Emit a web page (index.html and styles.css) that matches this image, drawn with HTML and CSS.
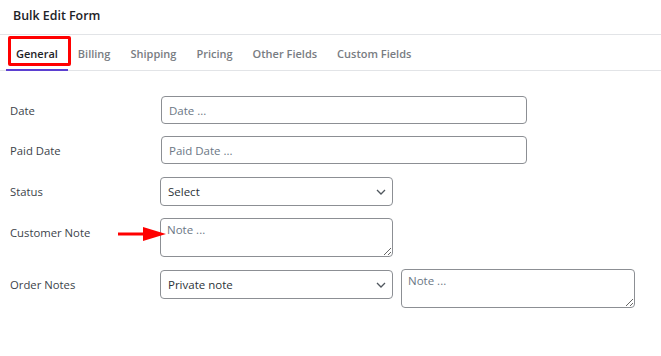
FILE: index.html
```html
<!DOCTYPE html>
<html lang="en">
<head>
    <meta charset="UTF-8">
    <meta name="viewport" content="width=device-width, initial-scale=1.0">
    <title>Bulk Edit Form</title>
    <link rel="stylesheet" href="styles.css">
</head>
<body>
    <div class="header">Bulk Edit Form</div>

    <div class="tabs">
        <span class="tab active">General</span>
        <span class="tab">Billing</span>
        <span class="tab">Shipping</span>
        <span class="tab">Pricing</span>
        <span class="tab">Other Fields</span>
        <span class="tab">Custom Fields</span>
    </div>

    <div class="form">
        <div class="row">
            <label for="date">Date</label>
            <input type="text" id="date" class="wide" placeholder="Date ...">
        </div>
        <div class="row paid-row">
            <label for="paid">Paid Date</label>
            <input type="text" id="paid" class="wide" placeholder="Paid Date ...">
        </div>
        <div class="row">
            <label for="status">Status</label>
            <div class="select-wrap">
                <select id="status">
                    <option>Select</option>
                </select>
                <svg class="chevron" width="10" height="6" viewBox="0 0 10 6"><path d="M1 1l4 4 4-4" fill="none" stroke="#50575e" stroke-width="1.3"/></svg>
            </div>
        </div>
        <div class="row note-row">
            <label for="cnote">Customer Note</label>
            <svg class="arrow" width="50" height="14" viewBox="0 0 50 14"><path d="M0 5.5h28v3H0z" fill="#f00"/><path d="M25 0l23 7-23 7z" fill="#f00"/></svg>
            <textarea id="cnote" placeholder="Note ..."></textarea>
        </div>
        <div class="row">
            <label for="onotes">Order Notes</label>
            <div class="select-wrap">
                <select id="onotes">
                    <option>Private note</option>
                    <option>Note to customer</option>
                </select>
                <svg class="chevron" width="10" height="6" viewBox="0 0 10 6"><path d="M1 1l4 4 4-4" fill="none" stroke="#50575e" stroke-width="1.3"/></svg>
            </div>
            <textarea class="side-note" placeholder="Note ..."></textarea>
        </div>
    </div>
</body>
</html>
```

FILE: styles.css
```css
body {
    margin: 0;
    font-family: "Open Sans", "Noto Sans", sans-serif;
    font-size: 11.3px;
    color: #3c434a;
    background-color: #fff;
}
.header {
    padding: 0 13px;
    height: 34px;
    line-height: 32px;
    font-size: 12.4px;
    font-weight: 600;
    color: #1d2327;
    border-bottom: 1px solid #e2e4e7;
}
.tabs {
    display: flex;
    padding: 0 6px;
    height: 35px;
    border-bottom: 1px solid #e2e4e7;
}
.tab {
    position: relative;
    padding: 0 10px;
    line-height: 38px;
    font-size: 11px;
    font-weight: 600;
    color: #787c82;
}
.tab.active {
    color: #1d2327;
    border-bottom: 2px solid #5b3fd1;
    height: 34px;
}
.tab.active::after {
    content: "";
    position: absolute;
    left: 2px;
    top: 1px;
    right: -3px;
    bottom: 3px;
    border: 3px solid #f00;
    border-radius: 2px;
}
.form {
    padding: 25px 10px;
    display: flex;
    flex-direction: column;
    gap: 12px;
}
.row {
    position: relative;
    display: flex;
    align-items: flex-start;
}
.paid-row,
.note-row {
    margin-bottom: 1px;
}
.row label {
    width: 150px;
    flex-shrink: 0;
    padding-top: 2px;
    line-height: 26px;
    color: #3c434a;
}
input, select, textarea {
    font-family: inherit;
    font-size: 11.5px;
    color: #2c3338;
    border: 1px solid #8c8f94;
    border-radius: 4px;
    background: #fff;
    box-sizing: border-box;
    margin: 0;
}
input::placeholder, textarea::placeholder {
    color: #6b7785;
}
input.wide {
    width: 366px;
    height: 28px;
    padding: 0 7px;
    margin-left: 1px;
}
.select-wrap {
    position: relative;
    width: 233px;
}
select {
    appearance: none;
    -webkit-appearance: none;
    width: 100%;
    height: 29px;
    padding: 0 24px 0 7px;
}
.chevron {
    position: absolute;
    right: 7px;
    top: 12px;
    pointer-events: none;
}
textarea {
    width: 233px;
    height: 39px;
    padding: 3px 6px;
    resize: both;
}
.side-note {
    width: 234px;
    height: 39px;
    margin-left: 8px;
    margin-top: -1px;
}
.arrow {
    position: absolute;
    left: 108px;
    top: 9px;
}
```
